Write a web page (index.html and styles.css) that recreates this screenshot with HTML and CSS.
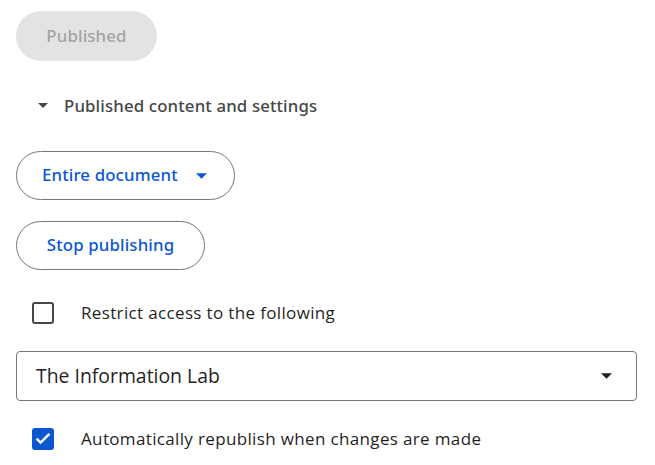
FILE: index.html
```html
<!doctype html>
<html>
  <head>
    <meta charset="utf-8">
    <title>Publish to the web</title>
    <link rel="stylesheet" href="styles.css">
  </head>
  <body>
    <div class="publish-panel">
      <button class="pill pill-disabled" disabled>Published</button>

      <div class="disclosure">
        <svg class="caret" width="10" height="5" viewBox="0 0 10 5"><path d="M0 0h10L5 5z"/></svg>
        <span>Published content and settings</span>
      </div>

      <button class="pill pill-outline pill-menu">
        <span>Entire document</span>
        <svg class="caret caret-blue" width="11" height="6" viewBox="0 0 10 5"><path d="M0 0h10L5 5z"/></svg>
      </button>

      <button class="pill pill-outline pill-stop">Stop publishing</button>

      <label class="check-row row-restrict">
        <span class="box"></span>
        <span>Restrict access to the following</span>
      </label>

      <div class="select">
        <span>The Information Lab</span>
        <svg class="caret caret-dark" width="11" height="6" viewBox="0 0 10 5"><path d="M0 0h10L5 5z"/></svg>
      </div>

      <label class="check-row row-auto">
        <span class="box box-checked">
          <svg width="18" height="18" viewBox="0 0 18 18"><path d="M2.6 8.6l4 4 8.8-8.8" fill="none" stroke="#fff" stroke-width="2.5"/></svg>
        </span>
        <span>Automatically republish when changes are made</span>
      </label>
    </div>
  </body>
</html>
```

FILE: styles.css
```css
body {
  margin: 0;
  background: #fff;
  font-family: "Open Sans", "Noto Sans", sans-serif;
}

.publish-panel {
  display: flex;
  flex-direction: column;
  align-items: flex-start;
  padding: 11px 18px 0 16px;
}

/* medium-weight labels */
.pill,
.disclosure {
  font-family: "Noto Sans", "Open Sans", sans-serif;
  font-size: 16.8px;
  font-weight: 500;
  letter-spacing: 0.15px;
}

.pill {
  border-radius: 25px;
  cursor: pointer;
  display: flex;
  align-items: center;
  box-sizing: border-box;
  padding-bottom: 3px;
}

.pill-disabled {
  height: 50px;
  width: 141px;
  justify-content: center;
  background: #e3e3e3;
  color: #a3a3a3;
  border: none;
}

.pill-outline {
  height: 49px;
  background: #fff;
  color: #0b57d0;
  border: 1px solid #747775;
}

.pill-menu {
  margin-top: 31px;
  width: 219px;
  padding-left: 25px;
  gap: 18px;
}

.pill-menu .caret { margin-top: 3px; }

.pill-stop {
  margin-top: 21px;
  width: 189px;
  justify-content: center;
}

.caret { fill: #444746; flex: none; }
.caret-blue { fill: #0b57d0; }
.caret-dark { fill: #1f1f1f; }

.disclosure {
  margin: 29px 0 0 22px;
  height: 30px;
  display: flex;
  align-items: center;
  gap: 16px;
  color: #444746;
}

.check-row {
  display: flex;
  align-items: center;
  gap: 27px;
  height: 30px;
  padding-left: 16px;
  font-size: 17px;
  letter-spacing: 0.35px;
  color: #1f1f1f;
}

.check-row > span:last-child { padding-bottom: 2px; }

.row-restrict { margin-top: 28px; }
.row-auto { margin-top: 23px; }

.box {
  width: 22px;
  height: 22px;
  box-sizing: border-box;
  border: 2px solid #444746;
  border-radius: 3px;
  display: flex;
}

.box-checked {
  background: #0b57d0;
  border-color: #0b57d0;
}

.select {
  margin-top: 23px;
  align-self: stretch;
  height: 50px;
  box-sizing: border-box;
  border: 1px solid #747775;
  border-radius: 4px;
  display: flex;
  align-items: center;
  justify-content: space-between;
  padding: 0 24px 0 19px;
  font-size: 19.4px;
  color: #1f1f1f;
}

.select span { padding-bottom: 2px; }
```
